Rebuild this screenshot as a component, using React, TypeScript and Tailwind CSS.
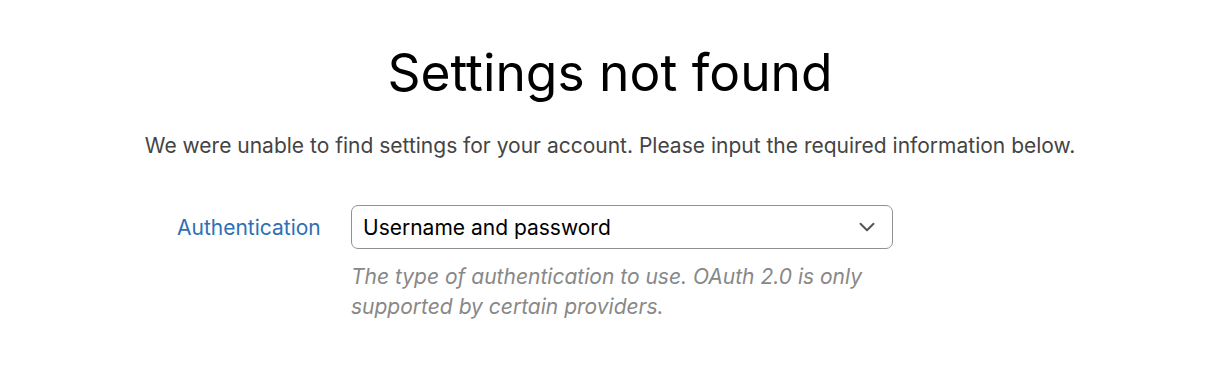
import { ChevronDown } from 'lucide-react';

function App() {
  return (
    <div className="min-h-[368px] w-full bg-white font-['Inter',sans-serif]">
      <div className="flex flex-col items-center pt-[40px]">
        <h1 className="text-[51.5px] leading-[64px] font-normal text-black">Settings not found</h1>
        <p className="mt-[28px] text-[21px] leading-[28px] text-[#444]">
          We were unable to find settings for your account. Please input the required information below.
        </p>
      </div>

      <div className="mt-[45px] flex items-start pl-[177px]">
        <label className="w-[174px] pt-[9px] text-[21px] leading-[28px] text-[#2f6fb3]">Authentication</label>
        <div className="w-[542px]">
          <div className="flex h-[44px] items-center justify-between rounded-[7px] border border-[#919191] pl-[11px] pr-[12px]">
            <span className="pt-[2px] text-[21px] text-black">Username and password</span>
            <ChevronDown size={26} strokeWidth={1.8} className="text-[#555]" />
          </div>
          <p className="mt-[13px] text-[21px] italic leading-[30px] text-[#888]">
            The type of authentication to use. OAuth 2.0 is only supported by certain providers.
          </p>
        </div>
      </div>
    </div>
  );
}

export default App;
